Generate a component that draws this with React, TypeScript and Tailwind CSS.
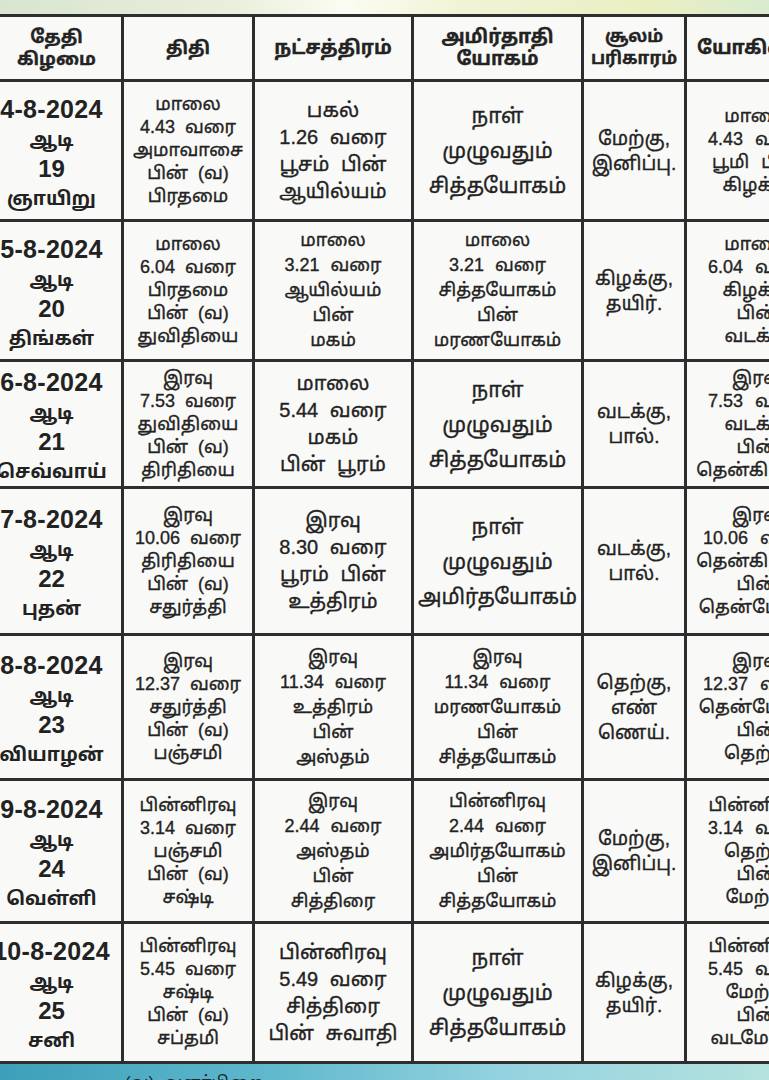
import React from "react";

const FONT = { fontFamily: '"Liberation Sans", "Noto Sans Tamil", "Noto Sans", sans-serif' };

const rows: { h: string; date: string[]; cells: string[][] }[] = [
  {
    h: "h-[137px]",
    date: ["4-8-2024", "ஆடி", "19", "ஞாயிறு"],
    cells: [
      ["மாலை", "4.43 வரை", "அமாவாசை", "பின் (வ)", "பிரதமை"],
      ["பகல்", "1.26 வரை", "பூசம் பின்", "ஆயில்யம்"],
      ["நாள்", "முழுவதும்", "சித்தயோகம்"],
      ["மேற்கு,", "இனிப்பு."],
      ["மாலை", "4.43 வரை", "பூமி பின்", "கிழக்கு"],
    ],
  },
  {
    h: "h-[137px]",
    date: ["5-8-2024", "ஆடி", "20", "திங்கள்"],
    cells: [
      ["மாலை", "6.04 வரை", "பிரதமை", "பின் (வ)", "துவிதியை"],
      ["மாலை", "3.21 வரை", "ஆயில்யம்", "பின்", "மகம்"],
      ["மாலை", "3.21 வரை", "சித்தயோகம்", "பின்", "மரணயோகம்"],
      ["கிழக்கு,", "தயிர்."],
      ["மாலை", "6.04 வரை", "கிழக்கு", "பின்", "வடக்கு"],
    ],
  },
  {
    h: "h-[124px]",
    date: ["6-8-2024", "ஆடி", "21", "செவ்வாய்"],
    cells: [
      ["இரவு", "7.53 வரை", "துவிதியை", "பின் (வ)", "திரிதியை"],
      ["மாலை", "5.44 வரை", "மகம்", "பின் பூரம்"],
      ["நாள்", "முழுவதும்", "சித்தயோகம்"],
      ["வடக்கு,", "பால்."],
      ["இரவு", "7.53 வரை", "வடக்கு", "பின்", "தென்கிழக்கு"],
    ],
  },
  {
    h: "h-[144px]",
    date: ["7-8-2024", "ஆடி", "22", "புதன்"],
    cells: [
      ["இரவு", "10.06 வரை", "திரிதியை", "பின் (வ)", "சதுர்த்தி"],
      ["இரவு", "8.30 வரை", "பூரம் பின்", "உத்திரம்"],
      ["நாள்", "முழுவதும்", "அமிர்தயோகம்"],
      ["வடக்கு,", "பால்."],
      ["இரவு", "10.06 வரை", "தென்கிழக்கு", "பின்", "தென்மேற்கு"],
    ],
  },
  {
    h: "h-[142px]",
    date: ["8-8-2024", "ஆடி", "23", "வியாழன்"],
    cells: [
      ["இரவு", "12.37 வரை", "சதுர்த்தி", "பின் (வ)", "பஞ்சமி"],
      ["இரவு", "11.34 வரை", "உத்திரம்", "பின்", "அஸ்தம்"],
      ["இரவு", "11.34 வரை", "மரணயோகம்", "பின்", "சித்தயோகம்"],
      ["தெற்கு,", "எண்", "ணெய்."],
      ["இரவு", "12.37 வரை", "தென்மேற்கு", "பின்", "தெற்கு"],
    ],
  },
  {
    h: "h-[140px]",
    date: ["9-8-2024", "ஆடி", "24", "வெள்ளி"],
    cells: [
      ["பின்னிரவு", "3.14 வரை", "பஞ்சமி", "பின் (வ)", "சஷ்டி"],
      ["இரவு", "2.44 வரை", "அஸ்தம்", "பின்", "சித்திரை"],
      ["பின்னிரவு", "2.44 வரை", "அமிர்தயோகம்", "பின்", "சித்தயோகம்"],
      ["மேற்கு,", "இனிப்பு."],
      ["பின்னிரவு", "3.14 வரை", "தெற்கு", "பின்", "மேற்கு"],
    ],
  },
  {
    h: "h-[137px]",
    date: ["10-8-2024", "ஆடி", "25", "சனி"],
    cells: [
      ["பின்னிரவு", "5.45 வரை", "சஷ்டி", "பின் (வ)", "சப்தமி"],
      ["பின்னிரவு", "5.49 வரை", "சித்திரை", "பின் சுவாதி"],
      ["நாள்", "முழுவதும்", "சித்தயோகம்"],
      ["கிழக்கு,", "தயிர்."],
      ["பின்னிரவு", "5.45 வரை", "மேற்கு", "பின்", "வடமேற்கு"],
    ],
  },
];

const widths = ["w-[128px]", "w-[156px]", "w-[167px]", "w-[100px]", "w-[140px]"];

function styleFor(col: number, n: number): string {
  if (col === 0) return "text-[18px] leading-[23px] [word-spacing:5px]";
  if (col === 3) return "text-[19px] leading-[25px]";
  if (col === 4) return "text-[18px] leading-[23px] [word-spacing:7px]";
  if (n <= 3) return "text-[21px] leading-[35px]";
  if (n === 4) return "text-[20px] leading-[27px] [word-spacing:6px]";
  return "text-[18px] leading-[25px] [word-spacing:6px]";
}

function TextCell({ lines, w, cls }: { lines: string[]; w: string; cls: string }) {
  return (
    <div
      className={`${w} shrink-0 flex flex-col items-center justify-center text-center bg-[#f9f9f7] text-[#232323] whitespace-nowrap overflow-hidden [-webkit-text-stroke:0.35px_#232323] ${cls}`}
    >
      {lines.map((l, i) => (
        <div key={i}>{l}</div>
      ))}
    </div>
  );
}

export default function App() {
  return (
    <div className="w-[769px] h-[1080px] overflow-hidden bg-[#f9f9f7] flex flex-col" style={FONT}>
      <div className="h-[14px] shrink-0 bg-[linear-gradient(90deg,#d8e5cf_0%,#e9efdc_30%,#fbfcf3_45%,#f2f3d6_60%,#e9efc2_85%,#d9ebcf_100%)]" />
      <div className="-ml-[18px] flex flex-col gap-[3px] bg-[#2e2e2e] py-[3px] w-[860px] shrink-0">
        <div className="flex gap-[3px] h-[62px]">
          <TextCell w="w-[139px] pl-[10px]" cls="text-[18px] leading-[22px] font-bold" lines={["தேதி", "கிழமை"]} />
          <TextCell w={widths[0]} cls="text-[18px] leading-[22px] font-bold" lines={["திதி"]} />
          <TextCell w={widths[1]} cls="text-[19px] leading-[22px] font-bold" lines={["நட்சத்திரம்"]} />
          <TextCell w={widths[2]} cls="text-[19px] leading-[22px] font-bold" lines={["அமிர்தாதி", "யோகம்"]} />
          <TextCell w={widths[3]} cls="text-[17px] leading-[22px] font-bold" lines={["சூலம்", "பரிகாரம்"]} />
          <TextCell w="w-[140px] items-start pl-[10px]" cls="text-[19px] leading-[22px] font-bold" lines={["யோகினி"]} />
        </div>
        {rows.map((r, ri) => (
          <div key={ri} className={`flex gap-[3px] ${r.h}`}>
            <div className="w-[139px] shrink-0 flex flex-col items-center justify-center bg-[#f9f9f7] text-[#222] font-bold text-center pt-[8px]">
              <div className="text-[25px] leading-[30px] tracking-[0.3px]">{r.date[0]}</div>
              <div className="text-[19px] leading-[32px]">{r.date[1]}</div>
              <div className="text-[24px] leading-[26px]">{r.date[2]}</div>
              <div className="text-[19px] leading-[34px]">{r.date[3]}</div>
            </div>
            {r.cells.map((c, ci) => (
              <TextCell key={ci} w={widths[ci]} cls={styleFor(ci, c.length)} lines={c} />
            ))}
          </div>
        ))}
      </div>
      <div className="flex-1 overflow-hidden bg-[linear-gradient(90deg,#3d9fb9_0%,#5fb8cc_35%,#93d2df_65%,#b4e2de_100%)]">
        <div className="pl-[125px] pt-[9px] text-[17px] leading-[20px] text-[#1c2a30]">(வ)- வளர்பிறை</div>
      </div>
    </div>
  );
}
